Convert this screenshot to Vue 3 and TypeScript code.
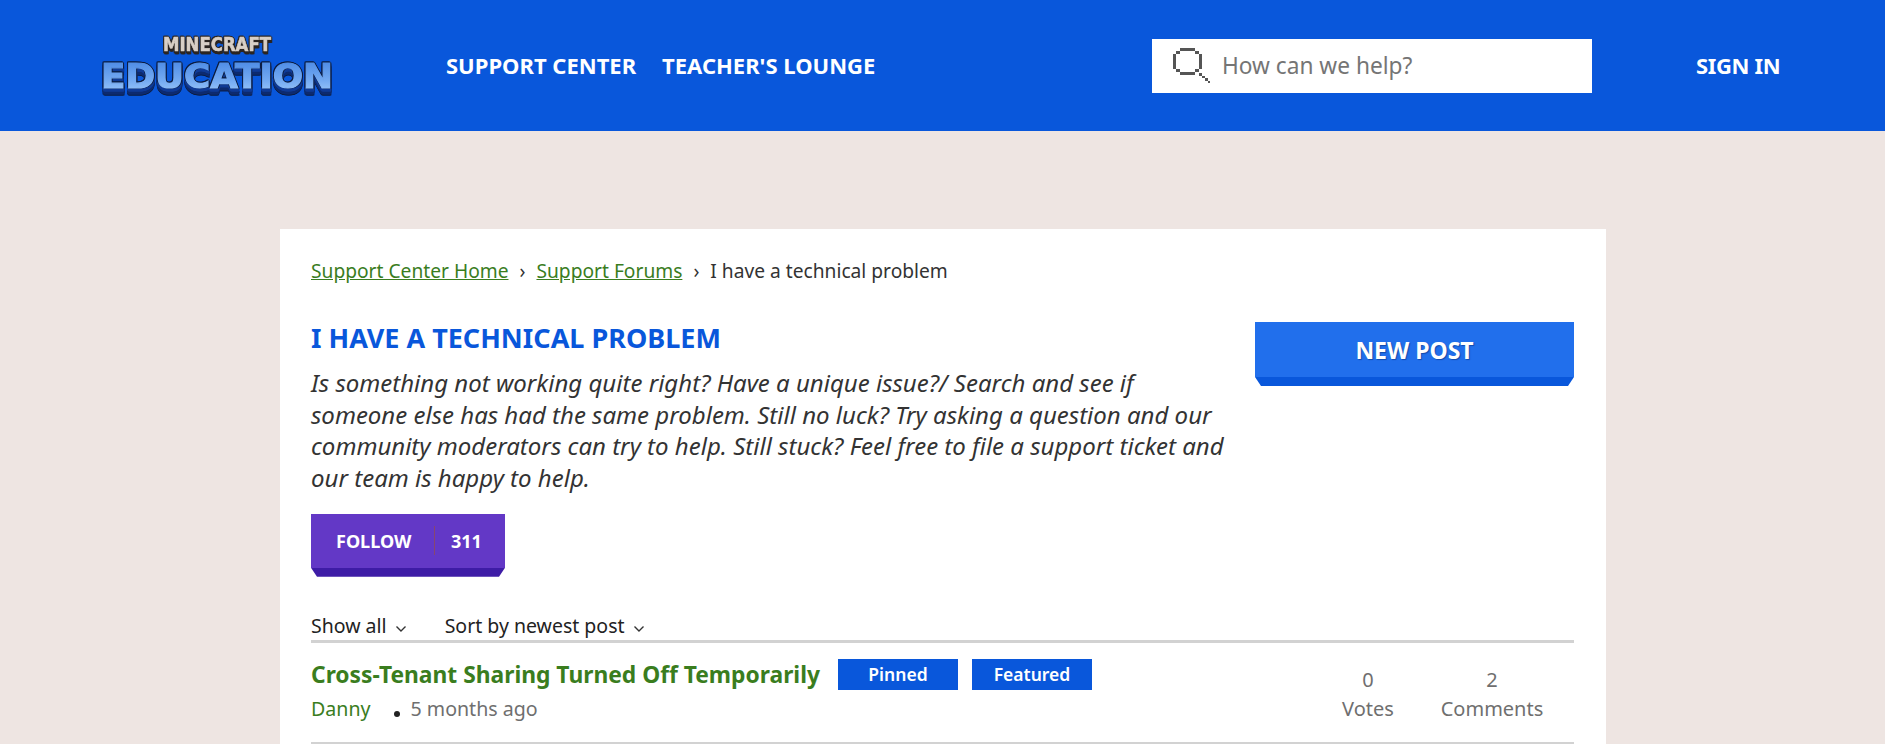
<script setup lang="ts">
const navLinks: string[] = ['SUPPORT CENTER', "TEACHER'S LOUNGE"]
</script>

<template>
  <div class="page">
    <header class="top">
      <svg class="logo" width="240" height="65" viewBox="0 0 240 65">
        <defs>
          <linearGradient id="edu" x1="0" y1="0" x2="0" y2="1">
            <stop offset="0" stop-color="#4585e2" />
            <stop offset="0.6" stop-color="#74aaf2" />
            <stop offset="1" stop-color="#a2ccfc" />
          </linearGradient>
        </defs>
        <text x="119" y="18" class="logo-mc" text-anchor="middle" textLength="108" lengthAdjust="spacingAndGlyphs">MINECRAFT</text>
        <text x="119" y="55" class="logo-edu" fill="url(#edu)" stroke="url(#edu)" text-anchor="middle" textLength="232" lengthAdjust="spacingAndGlyphs">EDUCATION</text>
      </svg>
      <nav class="nav">
        <a v-for="link in navLinks" :key="link" class="nav-link">{{ link }}</a>
      </nav>
      <div class="search">
        <svg class="search-icon" width="38" height="38" viewBox="0 0 38 38" shape-rendering="crispEdges">
          <path fill="#555" d="M8 1h15v3H8zM4 4h4v3H4zM23 4h4v3h-4zM1 7h3v15H1zM27 7h3v15h-3zM4 22h4v3H4zM23 22h4v3h-4zM8 25h15v3H8zM27 26h3v3h-3zM30 29h3v2h-3zM33 31h3v3h-3zM36 34h2v2h-2z" />
        </svg>
        <span class="search-text">How can we help?</span>
      </div>
      <a class="sign-in">SIGN IN</a>
    </header>

    <main class="card">
      <div class="crumbs">
        <a class="crumb-link">Support Center Home</a>
        <span class="sep">›</span>
        <a class="crumb-link">Support Forums</a>
        <span class="sep">›</span>
        <span>I have a technical problem</span>
      </div>

      <section class="intro">
        <div class="intro-text">
          <h1 class="title">I HAVE A TECHNICAL PROBLEM</h1>
          <p class="desc">Is something not working quite right? Have a unique issue?/ Search and see if someone else has had the same problem. Still no luck? Try asking a question and our community moderators can try to help. Still stuck? Feel free to file a support ticket and our team is happy to help.</p>
          <div class="follow">
            <span class="follow-label">FOLLOW</span>
            <span class="follow-count">311</span>
          </div>
        </div>
        <div class="new-post">NEW POST</div>
      </section>

      <div class="filters">
        <span class="filter">Show all
          <svg width="12" height="8" viewBox="0 0 12 8"><path d="M1.5 1.5 6 6l4.5-4.5" fill="none" stroke="#333" stroke-width="1.4" /></svg>
        </span>
        <span class="filter">Sort by newest post
          <svg width="12" height="8" viewBox="0 0 12 8"><path d="M1.5 1.5 6 6l4.5-4.5" fill="none" stroke="#333" stroke-width="1.4" /></svg>
        </span>
      </div>

      <article class="post">
        <div class="post-main">
          <div class="post-head">
            <a class="post-title">Cross-Tenant Sharing Turned Off Temporarily</a>
            <span class="tag">Pinned</span>
            <span class="tag">Featured</span>
          </div>
          <div class="post-meta">
            <a class="author">Danny</a>
            <span class="dot"></span>
            <span class="when">5 months ago</span>
          </div>
        </div>
        <div class="stat stat-votes"><span>0</span><span>Votes</span></div>
        <div class="stat stat-comments"><span>2</span><span>Comments</span></div>
      </article>
    </main>
  </div>
</template>

<style>
html, body {
  margin: 0;
  overflow: hidden;
}
</style>

<style scoped>
.page {
  height: 744px;
  overflow: hidden;
  background: #eee5e2;
  font-family: "Noto Sans", "Open Sans", sans-serif;
  color: #333;
}

.top {
  height: 131px;
  background: #0957db;
  display: flex;
  align-items: center;
  padding-left: 98px;
  color: #fff;
}

.logo {
  flex: none;
  margin-right: 108px;
}

.logo-mc {
  font: 700 19px "DejaVu Sans", sans-serif;
  fill: #d8cfc6;
  stroke: #d8cfc6;
  stroke-width: 0.6;
  filter: drop-shadow(-1px -1px 0 #2a2420) drop-shadow(1px 0 0 #2a2420) drop-shadow(0 3px 0 #2a2420);
}

.logo-edu {
  font: 700 33px "DejaVu Sans", sans-serif;
  stroke-width: 1.2;
  filter: drop-shadow(-1px -1px 0 #0c1c40) drop-shadow(1px 0 0 #0c1c40) drop-shadow(0 3px 0 #0f3a96) drop-shadow(0 3px 0 #0c2a70) drop-shadow(0 1px 0 #0c1c40);
}

.nav {
  display: flex;
  gap: 26px;
  width: 706px;
  margin-bottom: 2px;
}

.nav-link,
.sign-in {
  font-size: 22px;
  font-weight: 700;
}

.sign-in {
  margin-bottom: 2px;
  margin-left: 104px;
  letter-spacing: -0.35px;
}

.search {
  flex: none;
  width: 440px;
  height: 54px;
  background: #fff;
  display: flex;
  align-items: center;
  box-sizing: border-box;
  padding-left: 20px;
}

.search-icon {
  margin-right: 12px;
}

.search-text {
  font-size: 22.7px;
  color: #757575;
}

.card {
  width: 1326px;
  height: 700px;
  box-sizing: border-box;
  margin: 98px 0 0 280px;
  padding: 29px 32px 0 31px;
  background: #fff;
}

.crumbs {
  font-size: 19.2px;
  line-height: 25px;
  display: flex;
  color: #333;
}

.crumb-link {
  color: #3a7d1e;
  text-decoration: underline;
}

.sep {
  margin: 0 11px;
}

.intro {
  display: flex;
  justify-content: space-between;
  margin-top: 39px;
}

.intro-text {
  width: 920px;
}

.title {
  margin: 0;
  font-size: 27px;
  line-height: 32px;
  font-weight: 700;
  color: #0957db;
}

.desc {
  margin: 13px 0 0;
  font-size: 24px;
  line-height: 31.7px;
  font-style: italic;
  color: #333;
}

.follow {
  position: relative;
  margin-top: 20px;
  width: 194px;
  height: 54px;
  margin-bottom: 9px;
  background: #6338c6;
  color: #fff;
  font-size: 18px;
  font-weight: 700;
  display: flex;
  align-items: center;
  box-sizing: border-box;
  padding-left: 25px;
}

.follow::after,
.new-post::after {
  content: "";
  position: absolute;
  left: 0;
  right: 0;
  top: 100%;
  height: 9px;
  clip-path: polygon(0 0, 100% 0, calc(100% - 6px) 100%, 6px 100%);
}

.follow::after {
  background: #3e1ca6;
}

.follow-label {
  width: 98px;
  height: 29px;
  line-height: 30px;
  border-right: 1px solid #86466f;
  flex: none;
}

.follow-count {
  margin-left: 16px;
  line-height: 30px;
}

.new-post {
  position: relative;
  flex: none;
  width: 319px;
  height: 55px;
  background: #216fec;
  color: #fff;
  font-size: 23px;
  font-weight: 700;
  line-height: 57px;
  text-align: center;
  text-shadow: 1px 1px 1px rgba(9, 50, 130, 0.6);
}

.new-post::after {
  background: #0957db;
}

.filters {
  display: flex;
  gap: 38px;
  margin-top: 33px;
  height: 30px;
  line-height: 32px;
  font-size: 19.5px;
  color: #222;
  border-bottom: 3px solid #d2d2d2;
}

.filter svg {
  margin-left: 3px;
}

.post {
  display: flex;
  align-items: flex-start;
  height: 102px;
  box-sizing: border-box;
  border-bottom: 3px solid #d2d2d2;
}

.post-main {
  flex: 1;
}

.post-head {
  display: flex;
  align-items: center;
  margin-top: 16px;
}

.post-title {
  font-size: 22.8px;
  font-weight: 700;
  line-height: 31px;
  color: #3a7d1e;
  margin-right: 18px;
}

.tag {
  width: 120px;
  height: 31px;
  line-height: 31px;
  margin-right: 14px;
  background: #0957db;
  color: #fff;
  font-size: 17.5px;
  font-weight: 600;
  text-align: center;
}

.post-meta {
  display: flex;
  align-items: center;
  margin-top: 5px;
  font-size: 19.6px;
  line-height: 28px;
}

.author {
  color: #3a7d1e;
}

.dot {
  width: 6px;
  height: 6px;
  border-radius: 50%;
  background: #222;
  margin: 10px 11px 0 23px;
}

.when {
  color: #6f6f6f;
}

.stat {
  flex: none;
  display: flex;
  flex-direction: column;
  align-items: center;
  margin-top: 22px;
  font-size: 20px;
  line-height: 29px;
  color: #6f6f6f;
}

.stat-votes {
  width: 100px;
  margin-right: 24px;
}

.stat-comments {
  width: 100px;
  margin-right: 32px;
}
</style>
